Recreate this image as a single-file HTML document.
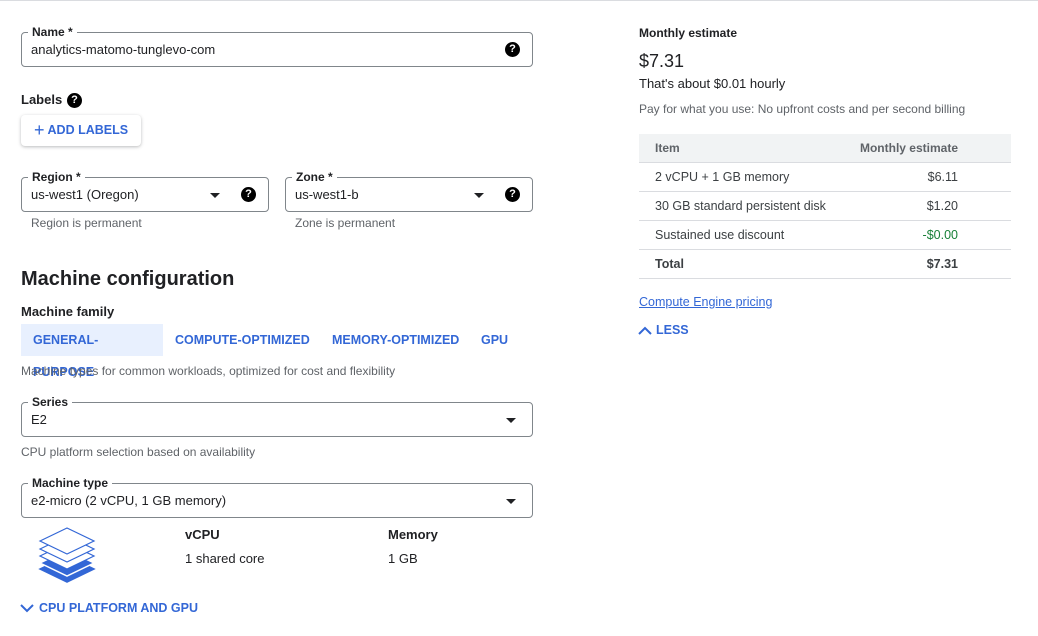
<!DOCTYPE html>
<html><head><style>
*{margin:0;padding:0;box-sizing:border-box}
body{width:1038px;height:636px;background:#fff;font-family:"Liberation Sans",Roboto,sans-serif;color:#202124;position:relative;overflow:hidden;border-top:1px solid #dadce0}
.a{position:absolute;white-space:nowrap}
.box{position:absolute;border:1px solid #80868b;border-radius:4px;height:35px}
.lbl{position:absolute;top:-9px;left:6px;background:#fff;padding:0 4px;font-size:12px;font-weight:bold;color:#202124;line-height:16px}
.val{position:absolute;left:9px;top:9px;font-size:13px}
.help{position:absolute;top:9px;width:15px;height:15px;border-radius:50%;background:#000;color:#fff;font-size:11px;font-weight:bold;text-align:center;line-height:15px}
.arr{position:absolute;top:15px;width:0;height:0;border-left:5px solid transparent;border-right:5px solid transparent;border-top:5px solid #202124}
.hint{font-size:12px;color:#5f6368}
.blue{color:#1a73e8;color:#3367d6}
.tab{position:absolute;top:323px;height:32px;line-height:32px;font-size:12.5px;font-weight:bold;color:#3367d6;padding:0 12px}
.row{position:absolute;left:639px;width:372px;height:29px;border-bottom:1px solid #dadce0;font-size:12.5px;color:#3c4043}
.row span{position:absolute;top:7px}
.row .l{left:16px}.row .r{right:53px}
</style></head><body>
<div class="box" style="left:21px;top:31px;width:512px"><div class="lbl">Name *</div><div class="val">analytics-matomo-tunglevo-com</div><div class="help" style="right:12px">?</div></div>
<div class="a" style="left:21px;top:91px;font-size:13px;font-weight:bold">Labels</div>
<div class="help" style="left:67px;top:92px;position:absolute">?</div>
<div class="a" style="left:21px;top:114px;width:120px;height:31px;border-radius:4px;box-shadow:0 1px 3px rgba(60,64,67,.35);font-size:12.5px;font-weight:bold;color:#3367d6;line-height:31px;padding-left:13px"><span style="font-size:18px;font-weight:normal;vertical-align:-2px">+</span> ADD LABELS</div>
<div class="box" style="left:21px;top:176px;width:248px"><div class="lbl">Region *</div><div class="val">us-west1 (Oregon)</div><div class="arr" style="right:48px"></div><div class="help" style="right:12px">?</div></div>
<div class="box" style="left:285px;top:176px;width:248px"><div class="lbl">Zone *</div><div class="val">us-west1-b</div><div class="arr" style="right:48px"></div><div class="help" style="right:12px">?</div></div>
<div class="a hint" style="left:31px;top:215px">Region is permanent</div>
<div class="a hint" style="left:295px;top:215px">Zone is permanent</div>
<div class="a" style="left:21px;top:267px;font-size:20px;font-weight:bold">Machine configuration</div>
<div class="a" style="left:21px;top:303px;font-size:13px;font-weight:bold">Machine family</div>
<div class="tab" style="left:21px;background:#e8f0fe;width:142px">GENERAL-PURPOSE</div>
<div class="tab" style="left:163px">COMPUTE-OPTIMIZED</div>
<div class="tab" style="left:320px">MEMORY-OPTIMIZED</div>
<div class="tab" style="left:469px">GPU</div>
<div class="a hint" style="left:21px;top:363px">Machine types for common workloads, optimized for cost and flexibility</div>
<div class="box" style="left:21px;top:401px;width:512px"><div class="lbl">Series</div><div class="val">E2</div><div class="arr" style="right:16px"></div></div>
<div class="a hint" style="left:21px;top:444px">CPU platform selection based on availability</div>
<div class="box" style="left:21px;top:482px;width:512px"><div class="lbl">Machine type</div><div class="val">e2-micro (2 vCPU, 1 GB memory)</div><div class="arr" style="right:16px"></div></div>
<svg class="a" style="left:36px;top:522px" width="62" height="64" viewBox="0 0 62 64">
<path d="M4 46 L31 33 L58 46 L31 59 Z" fill="#3367d6" stroke="#3367d6" stroke-width="1.5"/>
<path d="M4 40 L31 27 L58 40 L31 53 Z" fill="#3367d6" stroke="#fff" stroke-width="1.5"/>
<path d="M4 33 L31 20 L58 33 L31 46 Z" fill="#fff" stroke="#3367d6" stroke-width="1.2"/>
<path d="M4 26 L31 13 L58 26 L31 39 Z" fill="#fff" stroke="#3367d6" stroke-width="1.2"/>
<path d="M4 18 L31 5 L58 18 L31 31 Z" fill="#fff" stroke="#3367d6" stroke-width="1.2"/>
</svg>
<div class="a" style="left:185px;top:526px;font-size:13px;font-weight:bold">vCPU</div>
<div class="a" style="left:185px;top:550px;font-size:13px">1 shared core</div>
<div class="a" style="left:388px;top:526px;font-size:13px;font-weight:bold">Memory</div>
<div class="a" style="left:388px;top:550px;font-size:13px">1 GB</div>
<svg class="a" style="left:20px;top:602px" width="14" height="10"><path d="M1 2 L7 8 L13 2" fill="none" stroke="#3367d6" stroke-width="2"/></svg>
<div class="a" style="left:39px;top:600px;font-size:12.5px;font-weight:bold;color:#3367d6">CPU PLATFORM AND GPU</div>

<div class="a" style="left:639px;top:25px;font-size:12px;font-weight:bold">Monthly estimate</div>
<div class="a" style="left:639px;top:50px;font-size:18px">$7.31</div>
<div class="a" style="left:639px;top:75px;font-size:13px">That's about $0.01 hourly</div>
<div class="a hint" style="left:639px;top:101px">Pay for what you use: No upfront costs and per second billing</div>
<div class="row" style="top:133px;background:#f1f3f4;height:29px;color:#5f6368;font-weight:bold;font-size:12px"><span class="l">Item</span><span class="r">Monthly estimate</span></div>
<div class="row" style="top:162px"><span class="l">2 vCPU + 1 GB memory</span><span class="r">$6.11</span></div>
<div class="row" style="top:191px"><span class="l">30 GB standard persistent disk</span><span class="r">$1.20</span></div>
<div class="row" style="top:220px"><span class="l">Sustained use discount</span><span class="r" style="color:#188038">-$0.00</span></div>
<div class="row" style="top:249px;font-weight:bold"><span class="l">Total</span><span class="r">$7.31</span></div>
<div class="a" style="left:639px;top:294px;font-size:12.5px;color:#3367d6;text-decoration:underline">Compute Engine pricing</div>
<svg class="a" style="left:638px;top:325px" width="14" height="10"><path d="M1 8 L7 2 L13 8" fill="none" stroke="#3367d6" stroke-width="2"/></svg>
<div class="a" style="left:656px;top:322px;font-size:12.5px;font-weight:bold;color:#3367d6">LESS</div>
</body></html>
